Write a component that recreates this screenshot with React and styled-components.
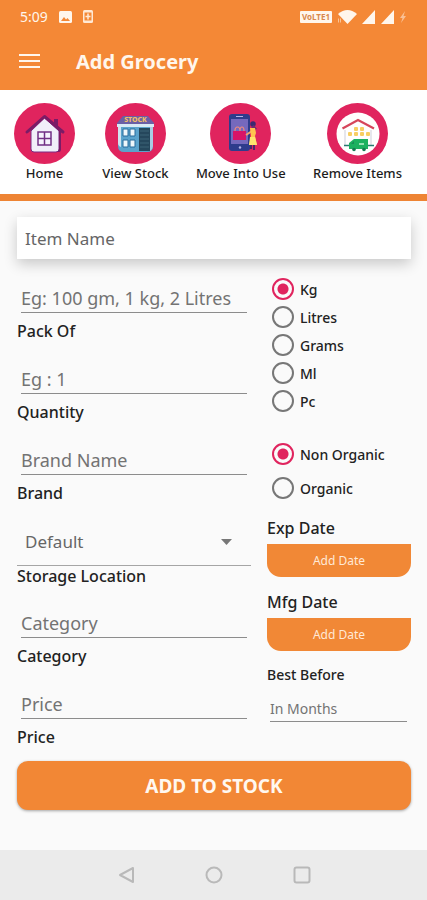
import React, { useState } from "react";
import styled, { createGlobalStyle } from "styled-components";

const GlobalStyle = createGlobalStyle`
  * {
    box-sizing: border-box;
  }
  body {
    margin: 0;
    background-color: #fafafa;
    color: #222;
    font-family: "Noto Sans", "Open Sans", sans-serif;
  }
  button,
  input,
  select {
    font-family: inherit;
  }
`;

const StyledPage = styled.div`
  min-height: 100vh;
  display: flex;
  flex-direction: column;
`;

const StyledHeader = styled.header`
  background-color: #f48836;
  color: #fff6ec;
`;

const StyledStatusBar = styled.div`
  display: flex;
  align-items: center;
  justify-content: space-between;
  height: 33px;
  padding: 0 20px;
  font-size: 14px;
`;

const StyledStatusGroup = styled.div`
  display: flex;
  align-items: center;
  gap: ${(props) => props.$gap}px;
`;

const StyledNetworkBadge = styled.span`
  width: 32px;
  border-radius: 1px;
  background-color: #fff6ec;
  color: #d9884c;
  font-size: 8px;
  font-weight: 700;
  line-height: 12px;
  text-align: center;
`;

const StyledTitleBar = styled.div`
  display: flex;
  align-items: center;
  gap: 36px;
  height: 57px;
  padding: 0 19px 1px;
`;

const StyledMenuButton = styled.button`
  display: flex;
  padding: 0;
  border: 0;
  background: none;
  color: inherit;
`;

const StyledTitle = styled.h1`
  margin: 0;
  font-size: 20px;
  font-weight: 700;
`;

const StyledShortcuts = styled.nav`
  display: flex;
  justify-content: space-between;
  padding: 13px 25px 12px 14px;
  border-bottom: 7px solid #ee8434;
  background-color: white;
`;

const StyledShortcut = styled.a`
  display: flex;
  flex-direction: column;
  align-items: center;
  color: #1c1c1c;
  font-size: 13px;
  font-weight: 500;
  line-height: 18px;
  text-decoration: none;
`;

const StyledForm = styled.form`
  padding: 16px 16px 0 17px;
`;

const StyledItemName = styled.input`
  display: block;
  width: 100%;
  height: 42px;
  padding: 0 8px;
  border: 0;
  outline: 0;
  background-color: white;
  box-shadow: 0 5px 14px rgba(0, 0, 0, 0.2);
  color: #555;
  font-size: 17px;
  &::placeholder {
    color: #666;
    opacity: 1;
  }
`;

const StyledColumns = styled.div`
  display: grid;
  grid-template-columns: minmax(0, 13fr) minmax(0, 8fr);
  column-gap: 16px;
  padding: 12px 0 3px;
`;

const StyledField = styled.div`
  display: flex;
  flex-direction: column;
  padding-bottom: 11px;
`;

const StyledSelectField = styled(StyledField)`
  padding-bottom: 10px;
`;

const StyledInput = styled.input`
  min-width: 0;
  height: 42px;
  margin: 0 4px 8px;
  padding: 12px 0 0;
  border: 0;
  border-bottom: 1px solid #8c8c8c;
  border-radius: 0;
  outline: 0;
  background: none;
  color: #555;
  font-size: 18px;
  &::placeholder {
    color: #737373;
    opacity: 1;
  }
`;

const StyledMonthsInput = styled(StyledInput)`
  height: 38px;
  margin: 0 4px 0 3px;
  font-size: 14px;
`;

const StyledLabel = styled.label`
  font-size: 16px;
  font-weight: 500;
  line-height: 20px;
`;

const StyledSmallLabel = styled(StyledLabel)`
  display: block;
  font-size: 14px;
  line-height: 18px;
`;

const StyledSelectWrapper = styled.div`
  position: relative;
  svg {
    position: absolute;
    right: 19px;
    top: 25px;
    pointer-events: none;
  }
`;

const StyledSelect = styled.select`
  appearance: none;
  display: block;
  width: 100%;
  height: 52px;
  padding: 4px 8px 0;
  border: 0;
  border-bottom: 1px solid #a5a5a5;
  border-radius: 0;
  outline: 0;
  background: none;
  color: #666;
  font-size: 17px;
`;

const StyledRadioGroup = styled.div`
  display: flex;
  flex-direction: column;
  padding: ${(props) => props.$top}px 0 0 5px;
`;

const StyledRadioLabel = styled.label`
  display: flex;
  align-items: center;
  gap: 6px;
  height: ${(props) => props.$rowHeight}px;
  font-size: 14px;
  font-weight: 500;
  white-space: nowrap;
`;

const StyledRadio = styled.input`
  appearance: none;
  flex: none;
  width: 22px;
  height: 22px;
  margin: 0;
  border: 2px solid #777;
  border-radius: 50%;
  &:checked {
    border-color: #e0245e;
    background: radial-gradient(circle, #e0245e 5px, transparent 6px);
  }
`;

const StyledDates = styled.div`
  padding-top: 13px;
`;

const StyledDateField = styled.div`
  display: flex;
  flex-direction: column;
  gap: 6px;
  padding-bottom: 15px;
`;

const StyledDateButton = styled.button`
  height: 33px;
  border: 0;
  border-radius: 0 0 14px 14px;
  background-color: #f18836;
  color: #ffe9d6;
  font-size: 12px;
`;

const StyledSubmit = styled.button`
  display: block;
  width: 100%;
  height: 49px;
  border: 0;
  border-radius: 11px;
  background-color: #f28735;
  box-shadow: 0 1px 3px rgba(0, 0, 0, 0.35);
  color: #fff8f0;
  font-size: 19px;
  font-weight: 700;
`;

const StyledSystemBar = styled.nav`
  display: flex;
  justify-content: center;
  align-items: center;
  gap: 66px;
  height: 50px;
  margin-top: auto;
  background-color: #ebebeb;
`;

const StyledSystemButton = styled.button`
  display: flex;
  padding: 0;
  border: 0;
  background: none;
`;

const HomeIcon = () => (
  <svg width="61" height="61" viewBox="0 0 61 61">
    <circle cx="30.5" cy="30.5" r="30.5" fill="#e0245e" />
    <path d="M40 16h4v11h-4z" fill="#7b1b66" />
    <path
      d="M17 28 30.5 15 45 28v18q0 3-3 3H20q-3 0-3-3z"
      fill="#f1eff9"
      stroke="#7a2a85"
      strokeWidth="1"
    />
    <path d="M45 28v18q0 3-3 3h3q2 0 2-3V28z" fill="#7b1b66" />
    <path
      d="M13 29 30.5 13.5 49 29"
      fill="none"
      stroke="#7b1b66"
      strokeWidth="3"
      strokeLinejoin="round"
      strokeLinecap="round"
    />
    <path
      d="M24 29h13v13H24zM30.5 29v13M24 35.5h13"
      fill="#f6f3fd"
      stroke="#713085"
      strokeWidth="1.5"
    />
  </svg>
);

const StockIcon = () => (
  <svg width="61" height="61" viewBox="0 0 61 61">
    <circle cx="30.5" cy="30.5" r="30.5" fill="#e0245e" />
    <path d="M13 22h35v21q0 6-6 6H19q-6 0-6-6z" fill="#5ba3cc" />
    <path d="M18 13h25l6 7v2H12v-2z" fill="#6b5fa5" />
    <path d="M12 21h37v3H12z" fill="#d8eaf5" />
    <path d="M13 24h3v20q-3-1-3-4z" fill="#cfe3f0" />
    <path
      d="M18 26h5v7h-5zM25 26h5v7h-5zM18 37h5v7h-5zM25 37h5v7h-5z"
      fill="#eff7fb"
      stroke="#286c9d"
      strokeWidth="1"
    />
    <path d="M34 25h11v23H34z" fill="#25475c" />
    <path
      d="M35 28h9M35 32h9M35 36h9M35 40h9M35 44h9"
      stroke="#3c6577"
      strokeWidth="1"
    />
    <path d="M45 24h3v19q0 3-3 5z" fill="#a9cde5" />
    <text
      x="30.5"
      y="18.5"
      textAnchor="middle"
      fontSize="7"
      fontWeight="800"
      fill="#f3bf65"
    >
      STOCK
    </text>
  </svg>
);

const MoveIcon = () => (
  <svg width="61" height="61" viewBox="0 0 61 61">
    <circle cx="30.5" cy="30.5" r="30.5" fill="#e0245e" />
    <rect x="19" y="11" width="21" height="37" rx="3" fill="#2e3c8c" />
    <path d="M21 16h17v25H21z" fill="#7569bd" />
    <path d="M26 13.5h7" stroke="#b6b5e8" strokeWidth="1" />
    <circle cx="30" cy="44.5" r="1.2" fill="#b6b5e8" />
    <path
      d="M25 28q0-4 2.500-4t2.500 4M30 28q0-4 2-4t2 4"
      fill="none"
      stroke="#f08a7a"
      strokeWidth="1.2"
    />
    <path d="M23 28h13v9H23z" fill="#d81467" />
    <circle cx="43" cy="21" r="2.8" fill="#3b2870" />
    <path d="M44 22l3 4-3 1-3-3z" fill="#6c2b71" />
    <path d="M36 32l6-4" stroke="#f4a46c" strokeWidth="2" />
    <path d="M40 25h5l1 5-1 3 2 9h-8l2-9z" fill="#ffc34f" />
    <path d="M40 34h5l2 8h-8z" fill="#ffe36d" />
    <path d="M41 42v4M44 42v5" stroke="#33266c" strokeWidth="1.7" />
  </svg>
);

const RemoveIcon = () => (
  <svg width="61" height="61" viewBox="0 0 61 61">
    <circle cx="30.5" cy="30.5" r="30.5" fill="#e0245e" />
    <circle cx="31" cy="31" r="21.5" fill="#fffefe" />
    <path d="M18 27v15M44 27v15" stroke="#dedee6" strokeWidth="1.5" />
    <path
      d="M15.500 25.500 31 17l16 8.500"
      fill="none"
      stroke="#d6455b"
      strokeWidth="2.2"
    />
    <g fill="#f7ce63">
      <rect x="27" y="24" width="4" height="4" rx="1" />
      <rect x="33" y="24" width="4" height="4" rx="1" />
      <rect x="21" y="29" width="4" height="4" rx="1" />
      <rect x="27" y="29" width="4" height="4" rx="1" />
      <rect x="33" y="29" width="4" height="4" rx="1" />
      <rect x="39" y="29" width="4" height="4" rx="1" />
    </g>
    <path d="M17 42.500h30" stroke="#277b70" strokeWidth="1.5" />
    <path d="M27 36h14v10H22v-6z" fill="#1db160" />
    <path d="M25 40l2-2v3h-3z" fill="#188d57" />
    <path d="M32 41h5" stroke="#bcf1ce" strokeWidth="1.5" />
    <circle cx="27" cy="46.5" r="1.8" fill="#177a52" />
    <circle cx="37" cy="46.5" r="1.8" fill="#177a52" />
  </svg>
);

const shortcuts = [
  { name: "Home", Icon: HomeIcon },
  { name: "View Stock", Icon: StockIcon },
  { name: "Move Into Use", Icon: MoveIcon },
  { name: "Remove Items", Icon: RemoveIcon },
];

const units = ["Kg", "Litres", "Grams", "Ml", "Pc"];
const types = ["Non Organic", "Organic"];

const Field = ({ id, label, placeholder }) => (
  <StyledField>
    <StyledInput id={id} placeholder={placeholder} />
    <StyledLabel htmlFor={id}>{label}</StyledLabel>
  </StyledField>
);

const RadioGroup = ({ name, options, value, onChange, top, rowHeight }) => (
  <StyledRadioGroup role="radiogroup" aria-label={name} $top={top}>
    {options.map((option) => (
      <StyledRadioLabel key={option} $rowHeight={rowHeight}>
        <StyledRadio
          type="radio"
          name={name}
          checked={value === option}
          onChange={() => onChange(option)}
        />
        {option}
      </StyledRadioLabel>
    ))}
  </StyledRadioGroup>
);

const DateField = ({ id, label }) => (
  <StyledDateField>
    <StyledLabel htmlFor={id}>{label}</StyledLabel>
    <StyledDateButton id={id} type="button">
      Add Date
    </StyledDateButton>
  </StyledDateField>
);

const StatusBar = () => (
  <StyledStatusBar>
    <StyledStatusGroup $gap={11}>
      <span>5:09</span>
      <svg width="13" height="12" viewBox="0 0 13 12">
        <rect width="13" height="12" rx="1.5" fill="#fff6ec" />
        <path d="M2 10l3-4 2 2.500 1.500-1.500L11 10z" fill="#f48836" />
      </svg>
      <svg width="10" height="13" viewBox="0 0 10 13">
        <rect width="10" height="13" rx="1.5" fill="#ffe9d5" />
        <path d="M1.500 2.500h7v8h-7z" fill="#f48836" />
        <path d="M5 3.500v6M2.500 6.500h5" stroke="#ffe9d5" strokeWidth="1.5" />
      </svg>
    </StyledStatusGroup>
    <StyledStatusGroup $gap={5}>
      <StyledNetworkBadge>VoLTE1</StyledNetworkBadge>
      <svg width="20" height="14" viewBox="0 0 20 14">
        <path d="M1 4q9.500-8 19 0l-9.500 10z" fill="#fff6ec" />
        <path d="M1.500 8.500v4M3.500 8.500v4" stroke="#fbc597" strokeWidth="1" />
      </svg>
      <svg width="32" height="14" viewBox="0 0 32 14">
        <path d="M13 0v14H0zM32 0v14H19z" fill="#fff6ec" />
      </svg>
      <svg width="8" height="14" viewBox="2 0 8 14">
        <path d="M8 1 3 8h2.500L4 13l5-7H6.500z" fill="#f9c095" />
      </svg>
    </StyledStatusGroup>
  </StyledStatusBar>
);

const App = () => {
  const [unit, setUnit] = useState("Kg");
  const [type, setType] = useState("Non Organic");
  return (
    <StyledPage>
      <GlobalStyle />
      <StyledHeader>
        <StatusBar />
        <StyledTitleBar>
          <StyledMenuButton aria-label="Menu">
            <svg width="21" height="16" viewBox="0 0 21 16">
              <path
                d="M0 2h21M0 8h21M0 14h21"
                stroke="currentColor"
                strokeWidth="2"
              />
            </svg>
          </StyledMenuButton>
          <StyledTitle>Add Grocery</StyledTitle>
        </StyledTitleBar>
      </StyledHeader>
      <StyledShortcuts>
        {shortcuts.map(({ name, Icon }) => (
          <StyledShortcut key={name} href="#">
            <Icon />
            {name}
          </StyledShortcut>
        ))}
      </StyledShortcuts>
      <StyledForm onSubmit={(e) => e.preventDefault()}>
        <StyledItemName aria-label="Item Name" placeholder="Item Name" />
        <StyledColumns>
          <div>
            <Field
              id="pack"
              label="Pack Of"
              placeholder="Eg: 100 gm, 1 kg, 2 Litres"
            />
            <Field id="quantity" label="Quantity" placeholder="Eg : 1" />
            <Field id="brand" label="Brand" placeholder="Brand Name" />
            <StyledSelectField>
              <StyledSelectWrapper>
                <StyledSelect id="storage">
                  <option>Default</option>
                </StyledSelect>
                <svg width="11" height="6" viewBox="0 0 11 6">
                  <path d="M0 0h11L5.500 6z" fill="#777" />
                </svg>
              </StyledSelectWrapper>
              <StyledLabel htmlFor="storage">Storage Location</StyledLabel>
            </StyledSelectField>
            <Field id="category" label="Category" placeholder="Category" />
            <Field id="price" label="Price" placeholder="Price" />
          </div>
          <div>
            <RadioGroup
              name="unit"
              options={units}
              value={unit}
              onChange={setUnit}
              top={4}
              rowHeight={28}
            />
            <RadioGroup
              name="type"
              options={types}
              value={type}
              onChange={setType}
              top={22}
              rowHeight={34}
            />
            <StyledDates>
              <DateField id="exp" label="Exp Date" />
              <DateField id="mfg" label="Mfg Date" />
              <StyledSmallLabel htmlFor="months">Best Before</StyledSmallLabel>
              <StyledField>
                <StyledMonthsInput id="months" placeholder="In Months" />
              </StyledField>
            </StyledDates>
          </div>
        </StyledColumns>
        <StyledSubmit type="submit">ADD TO STOCK</StyledSubmit>
      </StyledForm>
      <StyledSystemBar>
        <StyledSystemButton aria-label="Back">
          <svg width="22" height="20" viewBox="0 0 22 20">
            <path
              d="M18 3v14L5 10z"
              fill="none"
              stroke="#b9b9b9"
              strokeWidth="2"
              strokeLinejoin="round"
            />
          </svg>
        </StyledSystemButton>
        <StyledSystemButton aria-label="Home">
          <svg width="22" height="20" viewBox="0 0 22 20">
            <circle
              cx="11"
              cy="10"
              r="7.5"
              fill="none"
              stroke="#b9b9b9"
              strokeWidth="2"
            />
          </svg>
        </StyledSystemButton>
        <StyledSystemButton aria-label="Recent apps">
          <svg width="22" height="20" viewBox="0 0 22 20">
            <rect
              x="3.5"
              y="2.5"
              width="15"
              height="15"
              rx="2"
              fill="none"
              stroke="#b9b9b9"
              strokeWidth="2"
            />
          </svg>
        </StyledSystemButton>
      </StyledSystemBar>
    </StyledPage>
  );
};

export default App;
